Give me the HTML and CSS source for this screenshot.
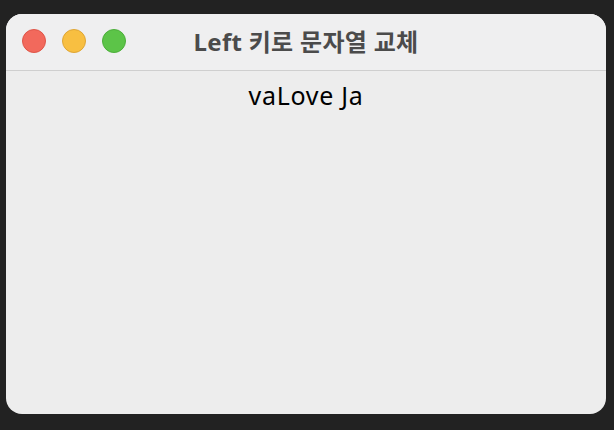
FILE: index.html
```html
<!DOCTYPE html>
<html lang="ko">
<head>
    <meta charset="UTF-8">
    <title>Left 키로 문자열 교체</title>
    <link rel="stylesheet" href="styles.css">
</head>
<body>
    <div class="window">
        <div class="titlebar">
            <div class="lights">
                <span class="light red"></span>
                <span class="light yellow"></span>
                <span class="light green"></span>
            </div>
            <div class="title">Left 키로 문자열 교체</div>
        </div>
        <div class="content">
            <p class="label">vaLove Ja</p>
        </div>
    </div>
</body>
</html>
```

FILE: styles.css
```css
html, body {
    margin: 0;
    padding: 0;
    height: 100%;
}
body {
    background: #222222;
    font-family: "Noto Sans", "Noto Sans CJK KR", sans-serif;
    padding: 14px 8px 16px 6px;
    box-sizing: border-box;
}
.window {
    width: 600px;
    height: 400px;
    background: #ededed;
    border-radius: 16px;
    overflow: hidden;
    display: flex;
    flex-direction: column;
}
.titlebar {
    height: 57px;
    background: #efeff0;
    border-bottom: 1px solid #cfcfcf;
    display: flex;
    align-items: center;
    position: relative;
    box-sizing: border-box;
    padding-bottom: 3px;
}
.lights {
    display: flex;
    gap: 16px;
    padding-left: 16px;
}
.light {
    width: 24px;
    height: 24px;
    border-radius: 50%;
    box-sizing: border-box;
}
.red {
    background: #f2695c;
    border: 1px solid #de5548;
}
.yellow {
    background: #f8bf41;
    border: 1px solid #dea535;
}
.green {
    background: #5cc448;
    border: 1px solid #4cae3a;
}
.title {
    position: absolute;
    left: 0;
    right: 0;
    text-align: center;
    font-size: 24px;
    letter-spacing: 0.3px;
    font-weight: bold;
    color: #4b4b4b;
    pointer-events: none;
}
.content {
    flex: 1;
    text-align: center;
}
.label {
    margin: 7px 0 0;
    font-size: 25px;
    letter-spacing: 0.7px;
    color: #000;
}
```
